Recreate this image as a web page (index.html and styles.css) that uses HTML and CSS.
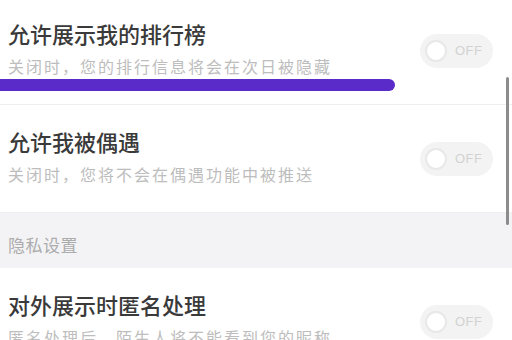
FILE: index.html
```html
<!DOCTYPE html>
<html lang="zh-CN">
<head>
  <meta charset="UTF-8" />
  <meta name="viewport" content="width=device-width, initial-scale=1.0"/>
  <title>隐私设置</title>
  <link rel="stylesheet" href="styles.css">
</head>
<body>

  <div class="list">
    <div class="item">
      <div class="item-text">
        <div class="item-title">允许展示我的排行榜</div>
        <div class="item-desc">关闭时，您的排行信息将会在次日被隐藏</div>
      </div>
      <div class="switch"><span class="knob"></span><span class="switch-label">OFF</span></div>
    </div>

    <div class="item">
      <div class="item-text">
        <div class="item-title">允许我被偶遇</div>
        <div class="item-desc">关闭时，您将不会在偶遇功能中被推送</div>
      </div>
      <div class="switch"><span class="knob"></span><span class="switch-label">OFF</span></div>
    </div>

    <div class="section-head">隐私设置</div>

    <div class="item">
      <div class="item-text">
        <div class="item-title">对外展示时匿名处理</div>
        <div class="item-desc">匿名处理后，陌生人将不能看到您的昵称</div>
      </div>
      <div class="switch"><span class="knob"></span><span class="switch-label">OFF</span></div>
    </div>
  </div>

  <!-- 标注线 -->
  <div class="mark-line"></div>
  <!-- 滚动条 -->
  <div class="scroll-bar"></div>

</body>
</html>
```

FILE: styles.css
```css
body {
  margin: 0;
  background: #fff;
  font-family: "Noto Sans CJK SC", "Noto Sans", sans-serif;
  overflow: hidden;
  height: 340px;
  position: relative;
}
.list {
  margin-top: -3px;
}
.item {
  height: 108px;
  box-sizing: border-box;
  display: flex;
  align-items: center;
  justify-content: space-between;
  padding: 0 19px 0 8px;
  border-bottom: 1px solid #efefef;
}
.item-text {
  padding-bottom: 6px;
}
.item-title {
  font-size: 22px;
  font-weight: 500;
  line-height: 28px;
  color: #3a3a3a;
}
.item-desc {
  margin-top: 8px;
  font-size: 16px;
  line-height: 22px;
  letter-spacing: 2px;
  color: #bdbdbd;
}
.switch {
  width: 73px;
  height: 34px;
  box-sizing: border-box;
  border-radius: 17px;
  background: #f3f3f3;
  display: flex;
  align-items: center;
  padding-left: 5px;
}
.knob {
  width: 22px;
  height: 22px;
  box-sizing: border-box;
  border-radius: 50%;
  background: #fff;
  border: 2px solid #e8e8e8;
}
.switch-label {
  margin-left: 8px;
  font-family: "Liberation Sans", sans-serif;
  font-size: 13px;
  color: #d2d2d2;
  letter-spacing: 0.5px;
}
.section-head {
  height: 55px;
  box-sizing: border-box;
  padding: 20px 8px 0;
  background: #f3f3f5;
  font-size: 17px;
  line-height: 24px;
  letter-spacing: 0.5px;
  color: #acacac;
}
.mark-line {
  position: absolute;
  left: -6px;
  top: 79px;
  width: 401px;
  height: 12px;
  border-radius: 6px;
  background: #5a2bc8;
}
.scroll-bar {
  position: absolute;
  right: 3px;
  top: 77px;
  width: 3px;
  height: 148px;
  border-radius: 2px;
  background: #8c8c8c;
}
```
